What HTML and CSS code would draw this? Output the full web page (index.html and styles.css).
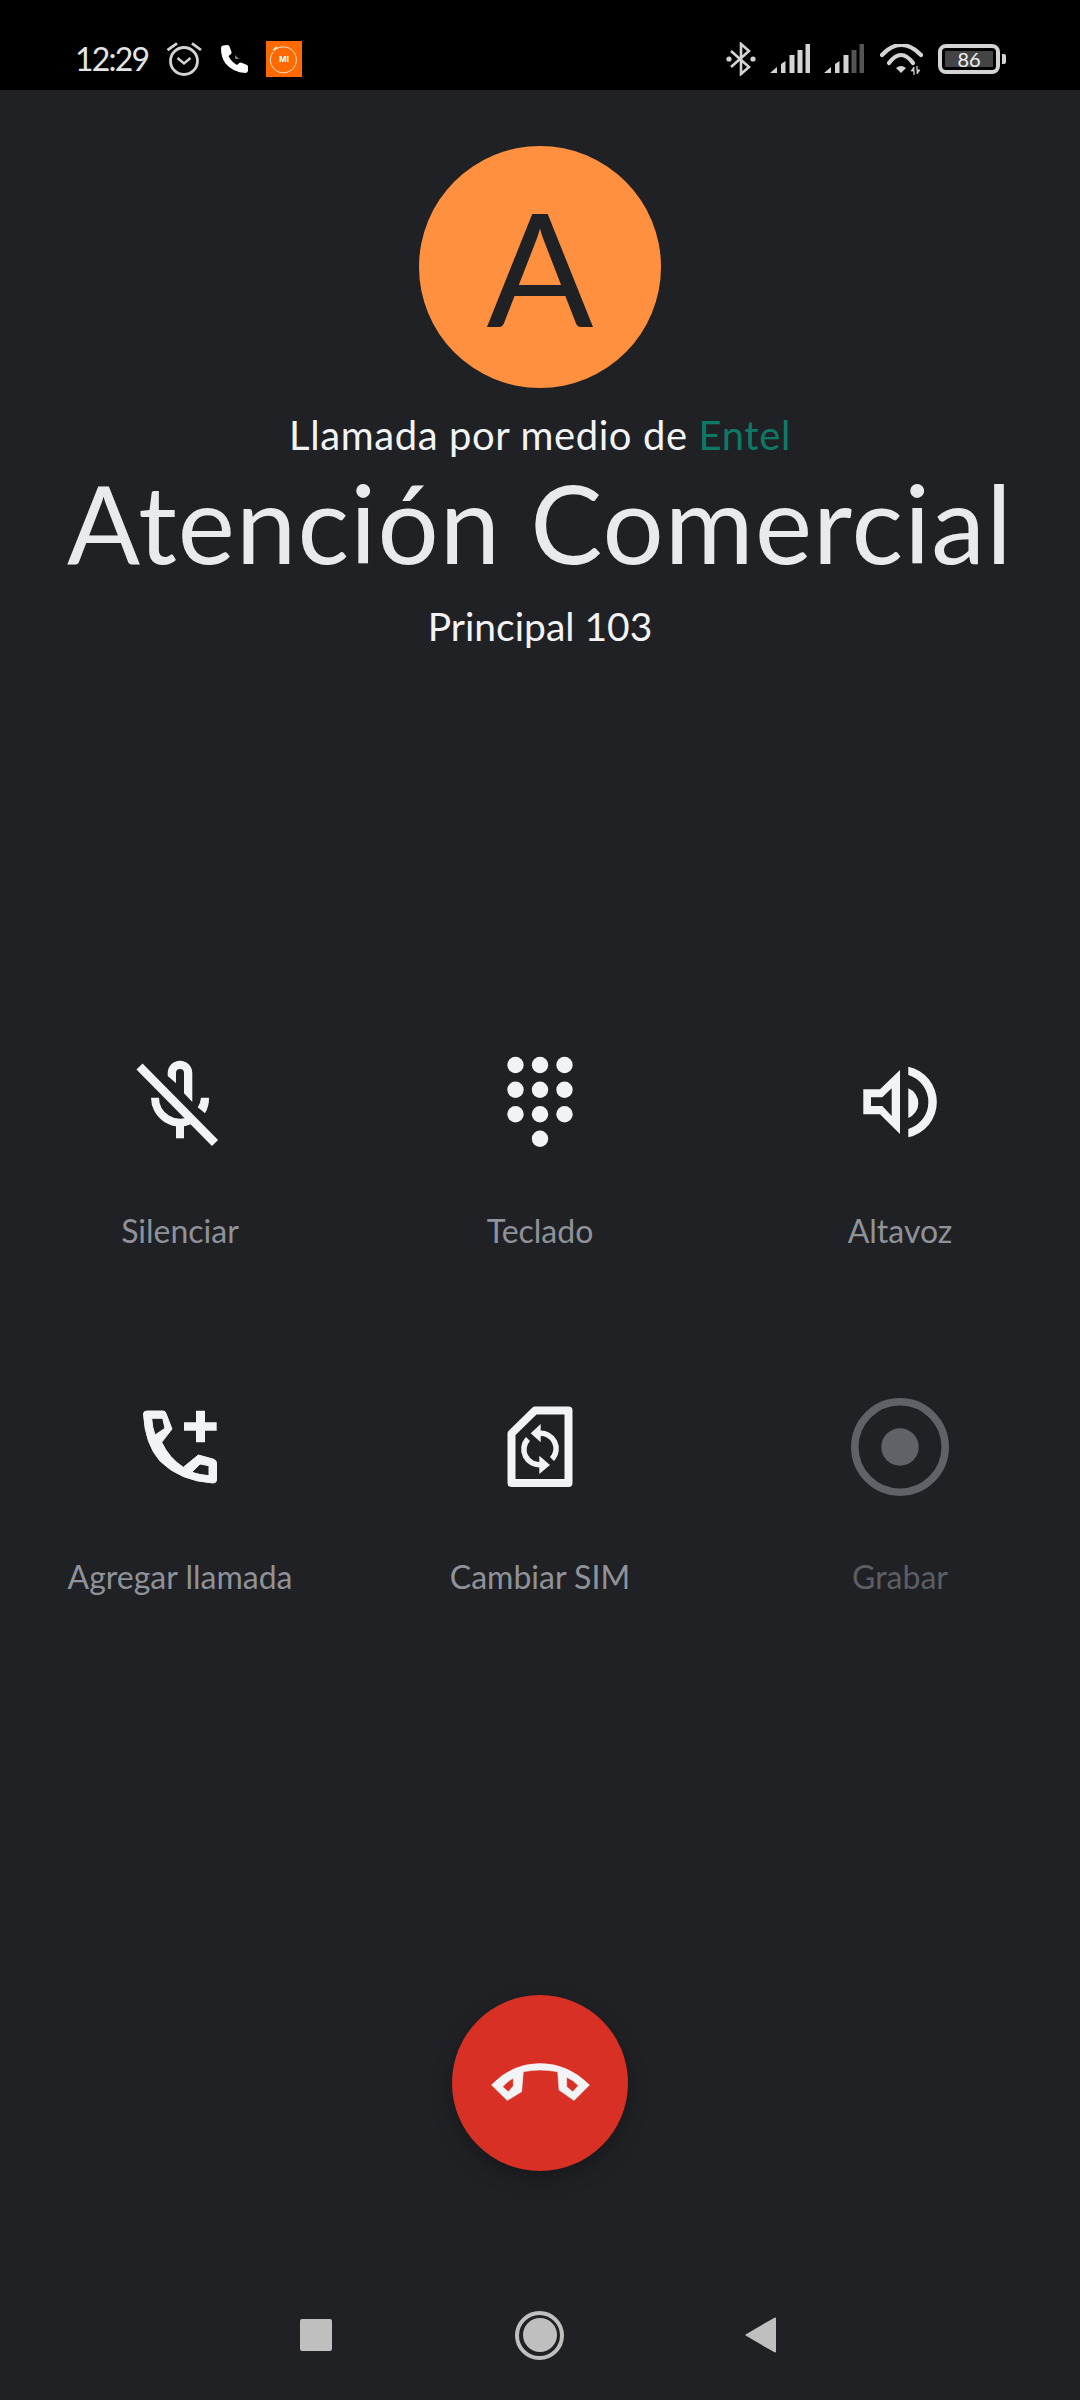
FILE: index.html
```html
<!DOCTYPE html>
<html lang="es">
<head>
<meta charset="utf-8">
<title>Llamada</title>
<link rel="stylesheet" href="styles.css">
</head>
<body>
<div class="screen">
  <header class="status">
    <div class="status-left">
      <span class="time">12:29</span>
      <svg class="ic-alarm" viewBox="0 0 36 36"><g fill="none" stroke="#d4d4d4" stroke-width="2.800"><circle cx="17" cy="21" r="13.500"/><path d="M10.500 18L17 23.500L23.500 18" stroke-width="2.400"/><path d="M.5 10L10 3.300"/><path d="M34 10L25 3.300"/></g></svg>
      <svg class="ic-call" viewBox="0 0 28 28"><path d="M1 3 Q1 1 3 .6 L7.500 0 Q9 0 9.500 1.500 L11.500 7 Q11.800 8.500 10.500 9.500 L8.500 11 Q11 16.500 17 20 L19 18.200 Q20 17.200 21.500 17.700 L26.500 19.700 Q28 20.300 28 22 L28 25.500 Q28 27.800 25.500 28 Q13 27.500 5.500 18.500 Q1 12.500 1 3Z" fill="#fff"/><path d="M15 10 L19.500 14 L15 14Z" fill="#777"/></svg>
      <div class="mi-badge"><svg class="mi-ring" viewBox="0 0 36 36"><path d="M11 7.500A13 13 0 1 1 7 11" fill="none" stroke="#ffe3cf" stroke-width="1"/><path d="M7.500 9.500L11 6" stroke="#ffe3cf" stroke-width="2.400"/></svg><span class="mi-text">MI</span></div>
    </div>
    <div class="status-right">
      <svg class="ic-bt" viewBox="0 0 30 34"><path d="M5 9 L23 25 L15 32 L15 2 L23 9 L5 25" fill="none" stroke="#d4d4d4" stroke-width="2.600"/><circle cx="3" cy="17" r="2.600" fill="#d4d4d4"/><circle cx="27" cy="17" r="2.600" fill="#d4d4d4"/></svg>
      <svg class="ic-sig" viewBox="0 0 40 29"><path d="M0 29 L7 23 V29Z M11 20 L15.500 17 V29 H11Z" fill="#d4d4d4"/><rect x="19.500" y="11" width="5" height="18" fill="#d4d4d4"/><rect x="27.500" y="6" width="5" height="23" fill="#d4d4d4"/><rect x="35.500" y="0" width="4.500" height="29" fill="#d4d4d4"/></svg>
      <svg class="ic-sig" viewBox="0 0 40 29"><path d="M0 29 L7 23 V29Z M11 20 L15.500 17 V29 H11Z" fill="#d4d4d4"/><rect x="19.500" y="11" width="5" height="18" fill="#d4d4d4"/><rect x="27.500" y="6" width="5" height="23" fill="#555"/><rect x="35.500" y="0" width="4.500" height="29" fill="#555"/></svg>
      <svg class="ic-wifi" viewBox="0 0 43 31"><g fill="none" stroke="#d4d4d4" stroke-width="4.200" stroke-linecap="round"><path d="M2 11Q21 -9 41 11"/><path d="M9 19Q21 3 33 19"/></g><path d="M16 24Q21 20 26 24L21 29Z" fill="#d4d4d4"/><path d="M34 31V23L31 27H34Z M37 22V30L40 26H37Z" fill="#d4d4d4" stroke="#d4d4d4" stroke-width=".8"/></svg>
      <div class="battery"><div class="batt-body"><span class="batt-level">86</span></div><span class="batt-nub"></span></div>
    </div>
  </header>

  <main class="call">
    <div class="avatar">A</div>
    <p class="via">Llamada por medio de <span class="carrier">Entel</span></p>
    <h1 class="name">Atención Comercial</h1>
    <p class="line">Principal 103</p>

    <section class="actions">
      <div class="action">
        <svg class="ic" viewBox="0 0 120 120"><path fill="#f1f3f4" d="M47.700 36V33a12.300 12.300 0 0 1 24.600 0V62L64 53.300V33a4 4 0 0 0-8 0V43.300Z"/><path fill="none" stroke="#f1f3f4" stroke-width="8" d="M35 57.700A25 25 0 0 0 71 80"/><path fill="#f1f3f4" d="M81 57.700H89A29 29 0 0 1 85 73.300L77.700 67.300A21 21 0 0 0 81 57.700Z"/><rect x="56" y="82" width="8" height="16.300" fill="#f1f3f4"/><path stroke="#f1f3f4" stroke-width="8.600" d="M19.500 26.500L95 103"/></svg>
        <span class="label">Silenciar</span>
      </div>
      <div class="action">
        <svg class="ic" viewBox="0 0 120 120"><g fill="#f1f3f4"><circle cx="35.500" cy="25" r="8.200"/><circle cx="60" cy="25" r="8.200"/><circle cx="84.500" cy="25" r="8.200"/><circle cx="35.500" cy="49.700" r="8.200"/><circle cx="60" cy="49.700" r="8.200"/><circle cx="84.500" cy="49.700" r="8.200"/><circle cx="35.500" cy="74.300" r="8.200"/><circle cx="60" cy="74.300" r="8.200"/><circle cx="84.500" cy="74.300" r="8.200"/><circle cx="60" cy="98.700" r="8.200"/></g></svg>
        <span class="label">Teclado</span>
      </div>
      <div class="action">
        <svg class="ic" viewBox="0 0 120 120"><path fill="#f1f3f4" fill-rule="evenodd" d="M23.300 49.300H40L60 30V94L40 74.300H23.300Z M31 57.300V66H42.300L51.700 76V48.300L42.300 57.300Z"/><path fill="#f1f3f4" d="M68.300 48.300A16 16 0 0 1 68.300 78Z M68.300 26.700A36.100 36.100 0 0 1 68.300 97.300V89A28.200 28.200 0 0 0 68.300 35Z"/></svg>
        <span class="label">Altavoz</span>
      </div>
      <div class="action">
        <svg class="ic" viewBox="0 0 120 120"><path fill="#f1f3f4" fill-rule="evenodd" stroke="#f1f3f4" stroke-width="1" stroke-linejoin="round" d="M23.500 28Q23.500 25 27 25H43Q45.500 25 46 27.500L52 43L41.700 56.300Q49 72 63.300 81.300L78.300 69L93 73Q96.500 74 96.500 77V94Q96.500 97 93 97Q60 95 40 75Q25 58 23.500 28Z M31.700 32.300Q32 41 35 49L45 42.300L42.700 32.300Z M71.700 86.300Q80 89 89 89.700V79.700L80 78Z"/><path fill="#f1f3f4" d="M76 24.700H85V36.300H96.700V44.700H85V56.300H76V44.700H64V36.300H76Z"/></svg>
        <span class="label">Agregar llamada</span>
      </div>
      <div class="action">
        <svg class="ic" viewBox="0 0 120 120"><path fill="none" stroke="#f1f3f4" stroke-width="8" stroke-linejoin="round" d="M31.500 47.500L55 24.500H88.500V97H31.500Z"/><path fill="none" stroke="#f1f3f4" stroke-width="5.500" d="M59 47.500A15.200 15.200 0 0 1 72 73"/><path fill="none" stroke="#f1f3f4" stroke-width="5.500" d="M61 78.500A15.200 15.200 0 0 1 48 53"/><path fill="#f1f3f4" d="M60.700 38V56.300L50.700 47.300Z M59.300 69.700V88L70 79Z"/></svg>
        <span class="label">Cambiar SIM</span>
      </div>
      <div class="action off">
        <svg class="ic" viewBox="0 0 120 120"><circle cx="60" cy="61" r="45.200" fill="none" stroke="#5f6266" stroke-width="7.500"/><circle cx="60" cy="61" r="18.700" fill="#5f6266"/></svg>
        <span class="label">Grabar</span>
      </div>
    </section>

    <div class="end-wrap">
      <button class="end" type="button" aria-label="Colgar">
        <svg class="ic-end" viewBox="0 0 176 176"><path fill="#f1f3f4" fill-rule="evenodd" stroke="#f1f3f4" stroke-width=".5" stroke-linejoin="round" d="M39.500 90Q60 68.500 88 68.500Q116 68.500 137.500 90L122 105.500L107 95L105.700 76.700Q88 73.500 71.300 76.700L69.700 96.700L55.300 105.500Z M50.700 91.700L56.300 96.700L61.300 91V83.300Q55 86.500 50.700 91.700Z M114.700 82.300V91.700L120.700 96.700L126.300 90.700Q121 85 114.700 82.300Z"/></svg>
      </button>
    </div>
  </main>

  <nav class="nav">
    <span class="nav-square"></span>
    <span class="nav-home"><span class="nav-dot"></span></span>
    <svg class="nav-back" viewBox="0 0 31 36"><path fill="#bfbfbf" stroke="#bfbfbf" stroke-width="2" stroke-linejoin="round" d="M1.500 18L30 1.500V34.500Z"/></svg>
  </nav>
</div>
</body>
</html>
```
FILE: styles.css
```css
* { box-sizing: border-box; }
html, body { margin: 0; padding: 0; background: #202125; }
body { font-family: "Lato", "Open Sans", sans-serif; }
.screen { width: 1080px; height: 2400px; display: flex; flex-direction: column; overflow: hidden; background: #202125; }

.status { flex: none; height: 90px; background: #000; display: flex; justify-content: space-between; padding: 0 74px 0 75px; }
.status-left, .status-right { display: flex; align-items: flex-start; }
.time { color: #e4e4e4; font-size: 32px; line-height: 36px; margin-top: 41px; letter-spacing: -1.8px; width: 92px; }
.ic-alarm { width: 36px; height: 36px; margin-top: 40px; }
.ic-call { width: 28px; height: 28px; margin: 45px 0 0 17px; }
.mi-badge { width: 36px; height: 36px; margin: 41px 0 0 18px; background: #ff6a00; position: relative; display: flex; align-items: center; justify-content: center; }
.mi-ring { position: absolute; inset: 0; width: 36px; height: 36px; }
.mi-text { color: #fff; font: 700 9px/1 "Liberation Sans", sans-serif; }
.ic-bt { width: 30px; height: 34px; margin: 42px 14px 0 0; }
.ic-sig { width: 40px; height: 29px; margin: 44px 14px 0 0; }
.ic-wifi { width: 43px; height: 31px; margin: 44px 15px 0 2px; }
.battery { display: flex; align-items: center; margin-top: 44px; height: 30px; }
.batt-body { width: 62px; height: 30px; border: 4px solid #d4d4d4; border-radius: 8px; padding: 3px; display: flex; }
.batt-level { flex: 1; background: #444; border-radius: 1px; color: #f1f1f1; font-size: 20px; line-height: 16px; text-align: center; }
.batt-nub { width: 4px; height: 10px; margin-left: 2px; background: #d4d4d4; border-radius: 0 2px 2px 0; }

.call { flex: 1; display: flex; flex-direction: column; align-items: center; }
.avatar { width: 242px; height: 242px; margin-top: 56px; border-radius: 50%; background: #ff9040; color: #202125; font-size: 158px; font-weight: 400; line-height: 240px; text-align: center; }
.via { margin: 23px 0 0; color: #f1f3f4; font-size: 40px; line-height: 49px; letter-spacing: .6px; }
.carrier { color: #0d7a66; }
.name { margin: 2px 0 0; color: #e8eaed; font-size: 108px; line-height: 120px; font-weight: 400; letter-spacing: 1.2px; }
.line { margin: 19px 0 0; color: #f1f3f4; font-size: 39px; line-height: 50px; }

.actions { margin-top: 389px; width: 1080px; display: grid; grid-template-columns: repeat(3, 360px); grid-auto-rows: 346px; }
.action { display: flex; flex-direction: column; align-items: center; }
.ic { width: 120px; height: 120px; }
.label { margin-top: 52px; color: #8f9299; font-size: 32px; line-height: 38px; }
.off .label { color: #5b5e63; }

.end-wrap { margin-top: 263px; }
.end { width: 176px; height: 176px; border: 0; padding: 0; border-radius: 50%; background: #d93025; box-shadow: 0 8px 20px rgba(0,0,0,.25); display: block; }
.ic-end { width: 176px; height: 176px; display: block; }

.nav { flex: none; height: 100px; display: flex; align-items: center; gap: 183px; padding: 0 0 0 300px; margin-bottom: 15px; }
.nav-square { width: 32px; height: 32px; background: #bfbfbf; border-radius: 2px; }
.nav-home { width: 49px; height: 49px; border: 4px solid #bfbfbf; border-radius: 50%; display: flex; align-items: center; justify-content: center; }
.nav-dot { width: 34px; height: 34px; background: #bfbfbf; border-radius: 50%; }
.nav-back { width: 31px; height: 36px; margin-left: -2px; }
```
